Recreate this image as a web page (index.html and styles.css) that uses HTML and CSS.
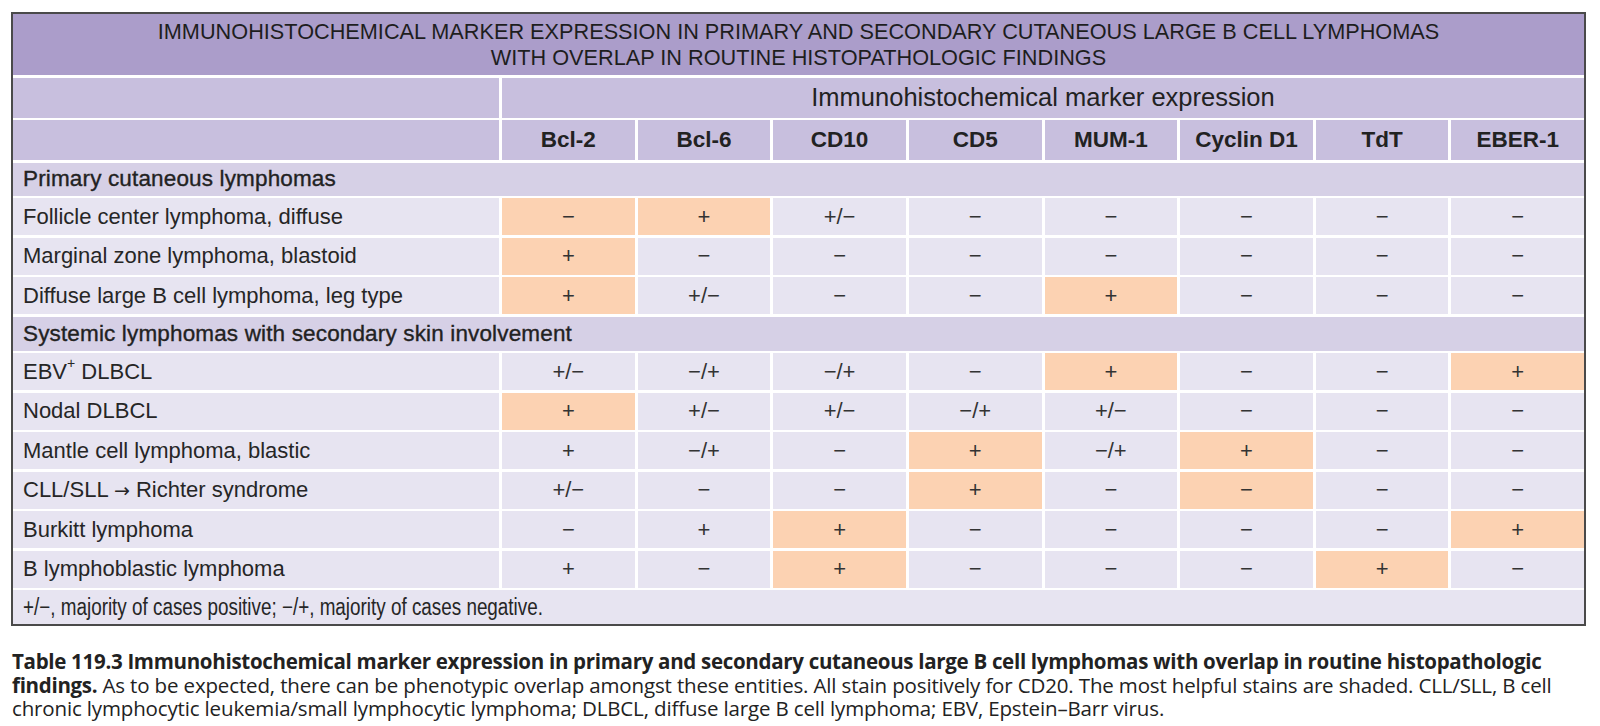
FILE: index.html
```html
<!DOCTYPE html>
<html lang="en">
<head>
<meta charset="utf-8">
<title>Table 119.3</title>
<link rel="stylesheet" href="styles.css">
</head>
<body>
<div class="page">
  <div class="tbl">
    <div class="title">IMMUNOHISTOCHEMICAL MARKER EXPRESSION IN PRIMARY AND SECONDARY CUTANEOUS LARGE B CELL LYMPHOMAS<br>WITH OVERLAP IN ROUTINE HISTOPATHOLOGIC FINDINGS</div>

    <div class="hd"></div>
    <div class="hd group">Immunohistochemical marker expression</div>

    <div class="hd"></div>
    <div class="hd col">Bcl-2</div>
    <div class="hd col">Bcl-6</div>
    <div class="hd col">CD10</div>
    <div class="hd col">CD5</div>
    <div class="hd col">MUM-1</div>
    <div class="hd col">Cyclin D1</div>
    <div class="hd col">TdT</div>
    <div class="hd col">EBER-1</div>

    <div class="sec">Primary cutaneous lymphomas</div>

    <div class="lbl">Follicle center lymphoma, diffuse</div>
    <div class="v sh">−</div><div class="v sh">+</div><div class="v">+/−</div><div class="v">−</div><div class="v">−</div><div class="v">−</div><div class="v">−</div><div class="v">−</div>

    <div class="lbl">Marginal zone lymphoma, blastoid</div>
    <div class="v sh">+</div><div class="v">−</div><div class="v">−</div><div class="v">−</div><div class="v">−</div><div class="v">−</div><div class="v">−</div><div class="v">−</div>

    <div class="lbl">Diffuse large B cell lymphoma, leg type</div>
    <div class="v sh">+</div><div class="v">+/−</div><div class="v">−</div><div class="v">−</div><div class="v sh">+</div><div class="v">−</div><div class="v">−</div><div class="v">−</div>

    <div class="sec sec2">Systemic lymphomas with secondary skin involvement</div>

    <div class="lbl"><span>EBV<sup>+</sup> DLBCL</span></div>
    <div class="v">+/−</div><div class="v">−/+</div><div class="v">−/+</div><div class="v">−</div><div class="v sh">+</div><div class="v">−</div><div class="v">−</div><div class="v sh">+</div>

    <div class="lbl">Nodal DLBCL</div>
    <div class="v sh">+</div><div class="v">+/−</div><div class="v">+/−</div><div class="v">−/+</div><div class="v">+/−</div><div class="v">−</div><div class="v">−</div><div class="v">−</div>

    <div class="lbl">Mantle cell lymphoma, blastic</div>
    <div class="v">+</div><div class="v">−/+</div><div class="v">−</div><div class="v sh">+</div><div class="v">−/+</div><div class="v sh">+</div><div class="v">−</div><div class="v">−</div>

    <div class="lbl"><span>CLL/SLL <span class="arrow">→</span> Richter syndrome</span></div>
    <div class="v">+/−</div><div class="v">−</div><div class="v">−</div><div class="v sh">+</div><div class="v">−</div><div class="v sh">−</div><div class="v">−</div><div class="v">−</div>

    <div class="lbl">Burkitt lymphoma</div>
    <div class="v">−</div><div class="v">+</div><div class="v sh">+</div><div class="v">−</div><div class="v">−</div><div class="v">−</div><div class="v">−</div><div class="v sh">+</div>

    <div class="lbl">B lymphoblastic lymphoma</div>
    <div class="v">+</div><div class="v">−</div><div class="v sh">+</div><div class="v">−</div><div class="v">−</div><div class="v">−</div><div class="v sh">+</div><div class="v">−</div>

    <div class="note"><span class="narrow">+/−, majority of cases positive; −/+, majority of cases negative.</span></div>
  </div>

  <p class="caption"><b>Table 119.3 Immunohistochemical marker expression in primary and secondary cutaneous large B cell lymphomas with overlap in routine histopathologic<br>findings.</b> As to be expected, there can be phenotypic overlap amongst these entities. All stain positively for CD20. The most helpful stains are shaded. CLL/SLL, B cell<br>chronic lymphocytic leukemia/small lymphocytic lymphoma; DLBCL, diffuse large B cell lymphoma; EBV, Epstein–Barr virus.</p>
</div>
</body>
</html>
```

FILE: styles.css
```css
html, body {
  margin: 0;
  padding: 0;
  background: #ffffff;
}

body {
  font-family: "Liberation Sans", Arial, sans-serif;
  color: #222222;
}

.page {
  padding: 12px 0 0 11px;
  width: 1575px;
}

.tbl {
  display: grid;
  grid-template-columns: 486px repeat(8, 1fr);
  column-gap: 3px;
  row-gap: 2.5px;
  border: 2px solid #4a4a4a;
  background: #ffffff;
}

.tbl > div {
  box-sizing: border-box;
  display: flex;
  align-items: center;
}

.title {
  grid-column: 1 / -1;
  height: 61px;
  background: #ab9dca;
  justify-content: center;
  text-align: center;
  font-size: 21.7px;
  line-height: 26px;
  color: #1e1e1e;
}

.hd {
  height: 40px;
  background: #c8bfde;
}

.group {
  grid-column: 2 / -1;
  justify-content: center;
  font-size: 25.5px;
}

.col {
  justify-content: center;
  font-weight: 700;
  font-size: 22.5px;
}

.sec {
  grid-column: 1 / -1;
  height: 33px;
  background: #d6d0e6;
  padding-left: 10px;
  font-size: 22.5px;
  letter-spacing: 0.15px;
  -webkit-text-stroke: 0.35px #222222;
}

.sec2 {
  height: 34px;
}

.lbl {
  height: 37px;
  background: #e7e4f1;
  padding-left: 10px;
  font-size: 22px;
  color: #262626;
  white-space: pre;
}

.lbl sup {
  font-size: 14px;
  line-height: 0;
  position: relative;
  top: -2px;
}

.arrow {
  font-family: "DejaVu Sans", sans-serif;
  font-size: 19px;
}

.v {
  height: 37px;
  background: #e7e4f1;
  justify-content: center;
  font-size: 22px;
  color: #333333;
}

.v.sh {
  background: #fcd2b2;
}

.note {
  grid-column: 1 / -1;
  height: 34px;
  background: #e7e4f1;
  padding-left: 10px;
  font-size: 23px;
  color: #262626;
}

.narrow {
  display: inline-block;
  white-space: nowrap;
  transform: scaleX(0.82);
  transform-origin: left center;
}

.caption {
  margin: 24px 0 0 1px;
  font-family: "Open Sans", "Noto Sans", sans-serif;
  font-size: 20.5px;
  letter-spacing: -0.15px;
  line-height: 23.5px;
  white-space: nowrap;
  color: #222222;
}

.caption b {
  font-weight: 700;
  letter-spacing: -0.3px;
}
```
